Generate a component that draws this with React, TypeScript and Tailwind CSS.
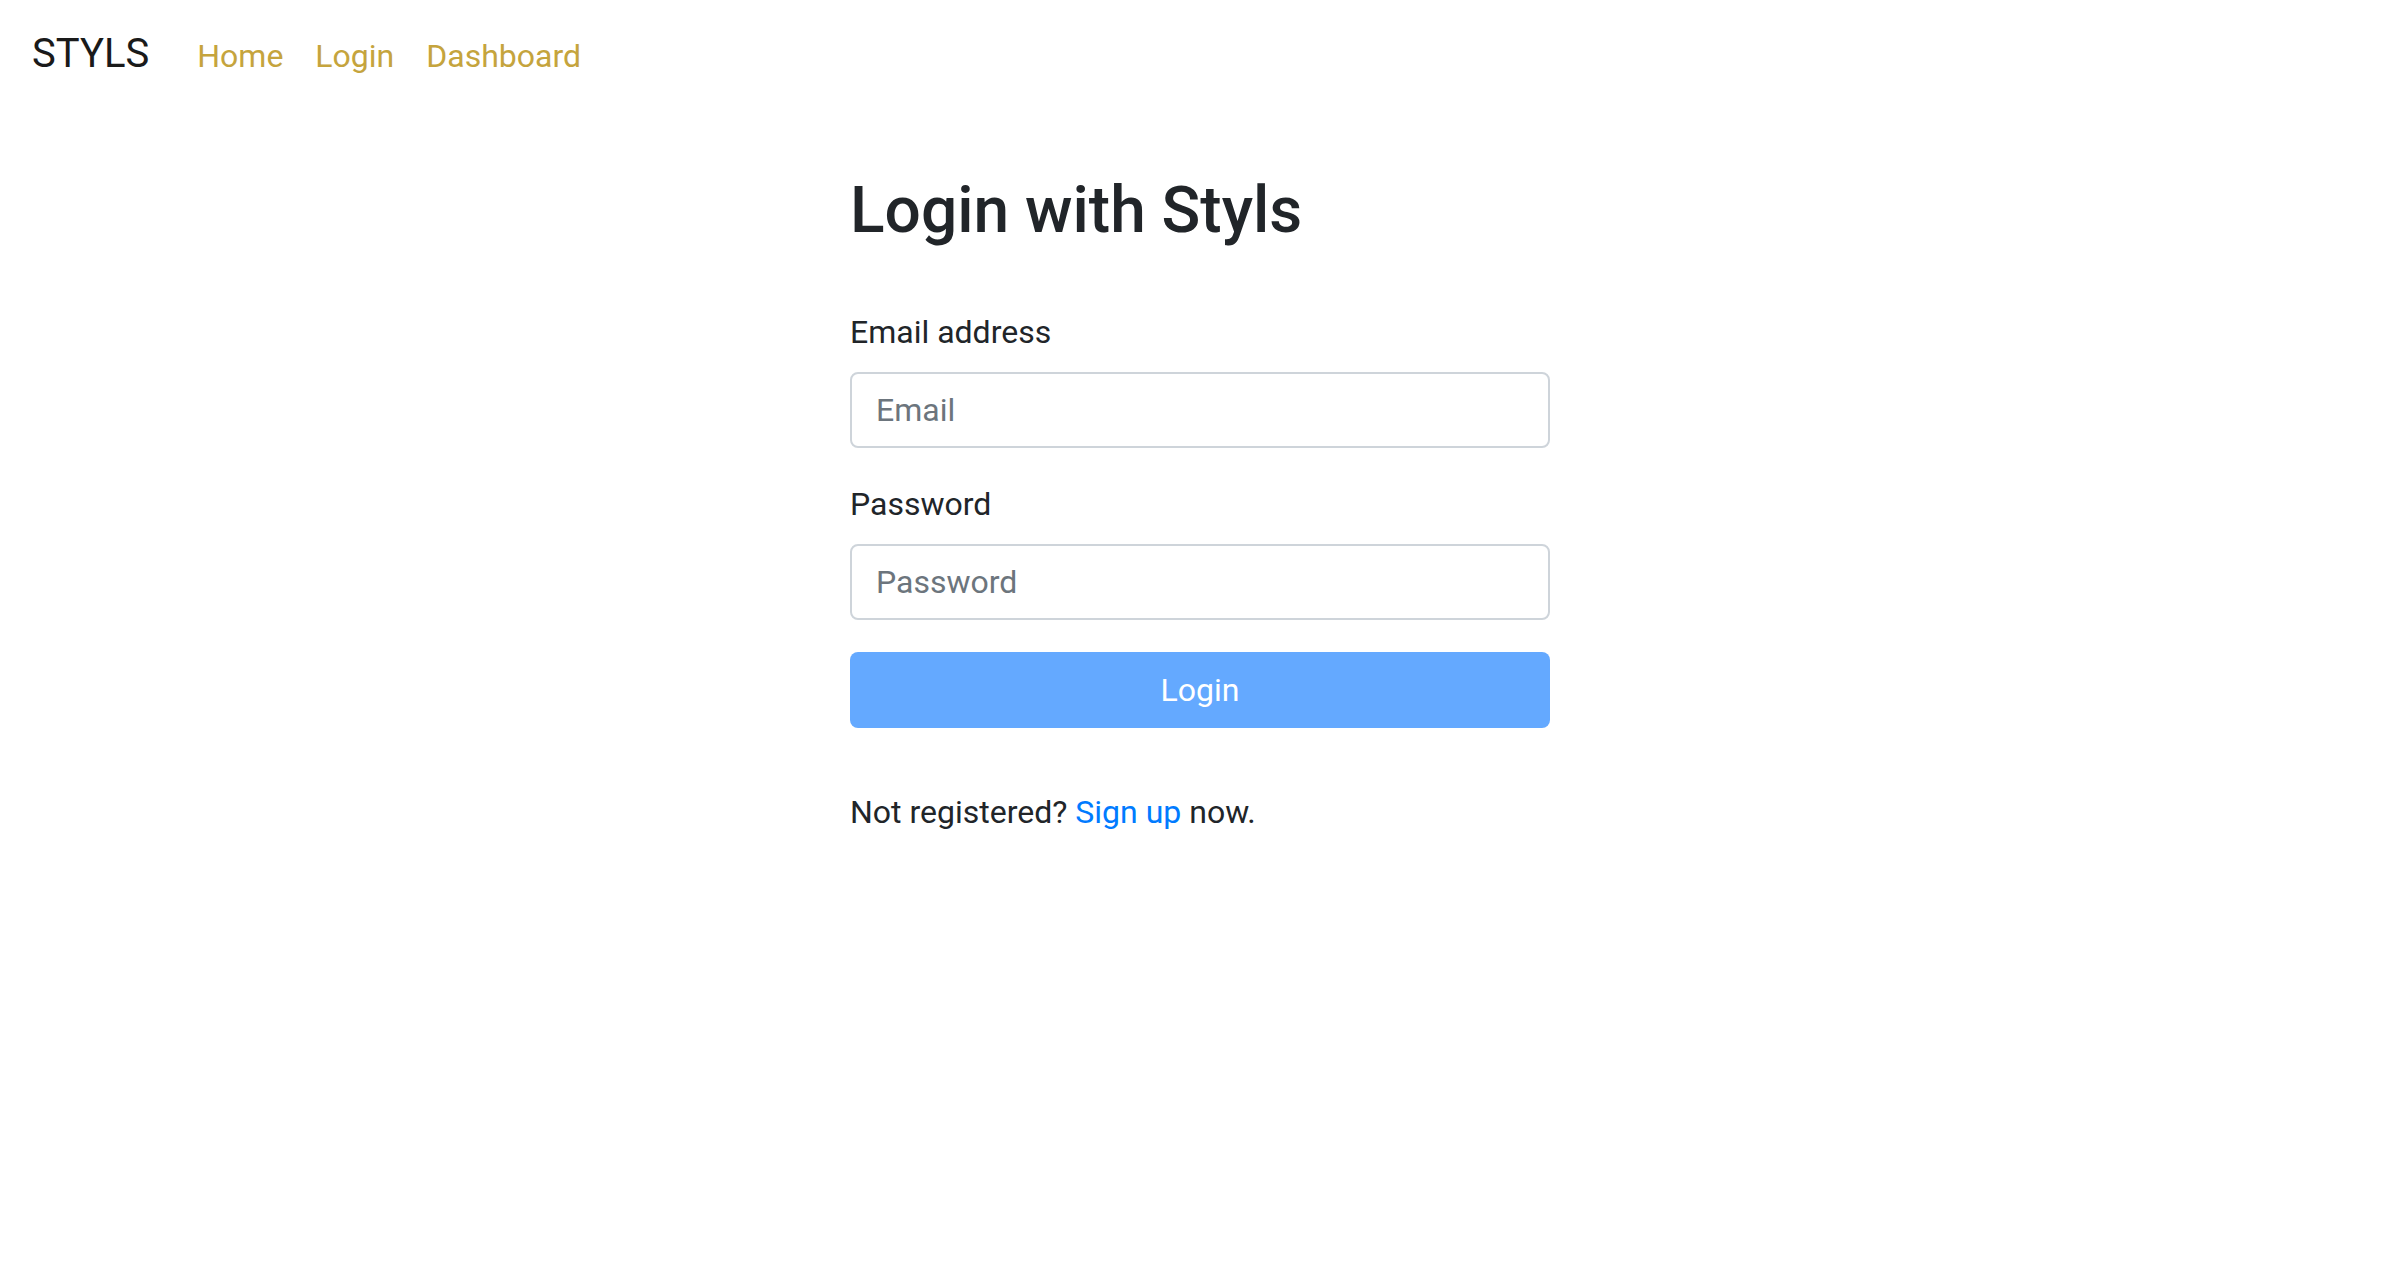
export default function App() {
  return (
    <div className="min-h-screen bg-white font-['Roboto','Liberation_Sans',sans-serif] text-[#212529]">
      <nav className="flex items-baseline px-[32px] pt-[24px] pb-[28px]">
        <a href="#" className="mr-[32px] text-[40px] leading-[60px] text-[#1a1a1a]">
          STYLS
        </a>
        <a href="#" className="px-[16px] text-[32px] leading-[48px] text-[#c5a43d]">
          Home
        </a>
        <a href="#" className="px-[16px] text-[32px] leading-[48px] text-[#c5a43d]">
          Login
        </a>
        <a href="#" className="px-[16px] text-[32px] leading-[48px] text-[#c5a43d]">
          Dashboard
        </a>
      </nav>

      <main className="mx-auto w-[700px]">
        <h1 className="mt-[60px] mb-[59px] text-[64px] leading-[77px] font-medium text-[#212529]">
          Login with Styls
        </h1>
        <form onSubmit={(e) => e.preventDefault()}>
          <div className="mb-[32px]">
            <label htmlFor="email" className="mb-[16px] block text-[32px] leading-[48px]">
              Email address
            </label>
            <input
              id="email"
              type="email"
              placeholder="Email"
              className="block h-[76px] w-full rounded-[8px] border-2 border-[#ced4da] px-[24px] text-[32px] text-[#495057] outline-none placeholder:text-[#6c757d]"
            />
          </div>
          <div className="mb-[32px]">
            <label htmlFor="password" className="mb-[16px] block text-[32px] leading-[48px]">
              Password
            </label>
            <input
              id="password"
              type="password"
              placeholder="Password"
              className="block h-[76px] w-full rounded-[8px] border-2 border-[#ced4da] px-[24px] text-[32px] text-[#495057] outline-none placeholder:text-[#6c757d]"
            />
          </div>
          <button
            type="submit"
            className="block h-[76px] w-full rounded-[8px] bg-[#64a9ff] text-[32px] leading-[48px] text-white"
          >
            Login
          </button>
        </form>
        <p className="mt-[60px] text-[32px] leading-[48px]">
          Not registered?{' '}
          <a href="#" className="text-[#007bff]">
            Sign up
          </a>{' '}
          now.
        </p>
      </main>
    </div>
  )
}
